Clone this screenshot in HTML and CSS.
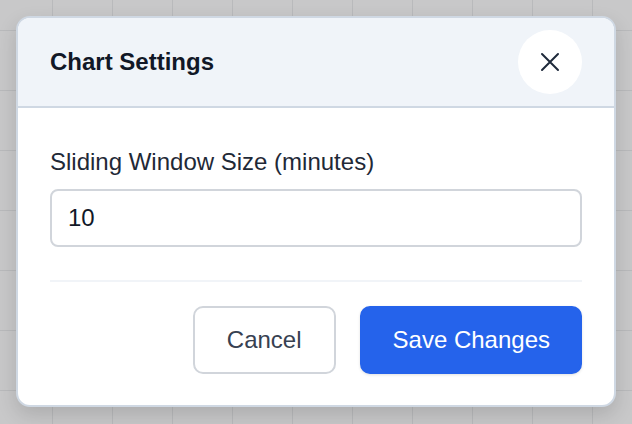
FILE: index.html
```html
<!DOCTYPE html>
<html lang="en">
<head>
<meta charset="utf-8">
<title>Chart Settings</title>
<link rel="stylesheet" href="styles.css">
</head>
<body>
  <div class="modal">
    <div class="modal-header">
      <h2 class="modal-title">Chart Settings</h2>
      <button class="close-btn" aria-label="Close">
        <svg width="20" height="20" viewBox="0 0 20 20" fill="none" stroke="#1e293b" stroke-width="2" stroke-linecap="round">
          <path d="M2 2 L18 18 M18 2 L2 18"/>
        </svg>
      </button>
    </div>
    <div class="modal-body">
      <label class="field-label" for="win">Sliding Window Size (minutes)</label>
      <input id="win" class="field-input" type="text" value="10">
      <div class="divider"></div>
      <div class="actions">
        <button class="btn btn-secondary">Cancel</button>
        <button class="btn btn-primary">Save Changes</button>
      </div>
    </div>
  </div>
</body>
</html>
```

FILE: styles.css
```css
* { box-sizing: border-box; }

html, body {
  margin: 0;
  height: 100%;
}

body {
  padding: 16px;
  font-family: "Liberation Sans", Arial, sans-serif;
  background-color: #c8c8c9;
  background-image:
    linear-gradient(to right, #b9babc 1px, transparent 1px),
    linear-gradient(to bottom, #b9babc 1px, transparent 1px);
  background-size: 60px 60px;
  background-position: 52px 30px;
}

.modal {
  width: 600px;
  background: #ffffff;
  border: 2px solid #cfd8e3;
  border-radius: 14px;
  overflow: hidden;
  box-shadow: 0 8px 20px rgba(0, 0, 0, 0.14);
}

.modal-header {
  display: flex;
  align-items: center;
  justify-content: space-between;
  padding: 12px 32px;
  background: #f0f4f9;
  border-bottom: 2px solid #cfd8e3;
}

.modal-title {
  margin: 0;
  font-size: 24px;
  font-weight: 700;
  line-height: 28px;
  color: #111827;
}

.close-btn {
  width: 64px;
  height: 64px;
  border: none;
  border-radius: 50%;
  background: #ffffff;
  display: flex;
  align-items: center;
  justify-content: center;
  padding: 0;
}

.modal-body {
  padding: 40px 32px 31px;
}

.field-label {
  display: block;
  font-size: 24px;
  line-height: 28px;
  color: #1f2937;
  margin-bottom: 13px;
}

.field-input {
  display: block;
  width: 100%;
  height: 58px;
  padding: 0 16px;
  border: 2px solid #d1d5db;
  border-radius: 8px;
  font-family: inherit;
  font-size: 24px;
  color: #111827;
  background: #ffffff;
  outline: none;
}

.divider {
  height: 2px;
  background: #f1f4f8;
  margin: 33px 0 24px;
}

.actions {
  display: flex;
  justify-content: flex-end;
  gap: 24px;
}

.btn {
  height: 68px;
  padding: 0 30px;
  font-family: inherit;
  font-size: 24px;
  border-radius: 10px;
  border: 2px solid transparent;
}

.btn-secondary {
  padding: 0 32px;
  background: #ffffff;
  border-color: #d1d5db;
  color: #374151;
}

.btn-primary {
  padding: 0 30px 0 31px;
  background: #2563eb;
  border-color: #2563eb;
  color: #ffffff;
  box-shadow: 0 1px 3px rgba(0, 0, 0, 0.12);
}
```
